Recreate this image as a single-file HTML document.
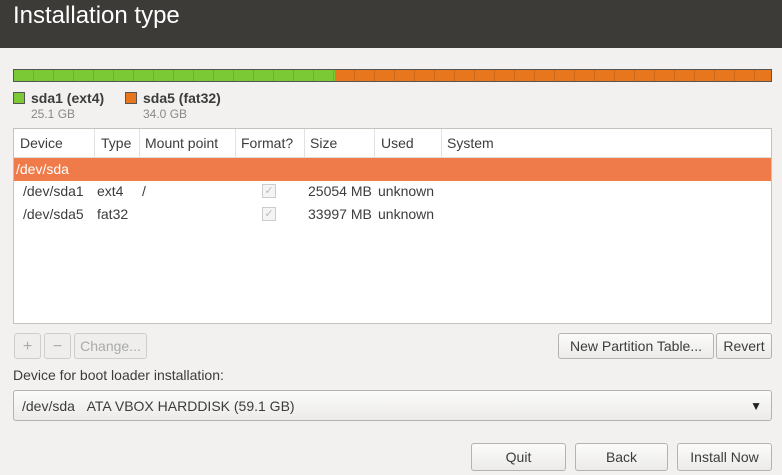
<!DOCTYPE html>
<html><head><style>
*{box-sizing:border-box;margin:0;padding:0}
body{width:782px;height:475px;background:#f2f1f0;font-family:"Liberation Sans",sans-serif;font-size:14px;color:#3c3c3c;position:relative;overflow:hidden}
.a{position:absolute}
.title{left:0;top:0;width:782px;height:48px;background:#3c3b37;color:#fff;font-size:24px;padding:2px 13px}
.bar{left:13px;top:69px;width:759px;height:13px;border:1px solid #555;overflow:hidden}
.g{left:0;top:0;width:321px;height:13px;background:#7bc935;background-image:repeating-linear-gradient(90deg,transparent 0 19px,rgba(0,0,0,.12) 19px 20px)}
.o{left:321px;top:0;width:440px;height:13px;background:#e8761c;background-image:repeating-linear-gradient(90deg,transparent 0 19px,rgba(0,0,0,.12) 19px 20px)}
.btn{border:1px solid #b5b3ae;border-radius:3px;background:linear-gradient(#fbfbfa,#ecebe9);text-align:center;line-height:25px;color:#3c3c3c}
.dis{color:#aaa;border-color:#cfcdc9;background:#efeeec}
.tbl{left:13px;top:128px;width:759px;height:196px;background:#fff;border:1px solid #c4c2bd}
.hd{height:29px;border-bottom:1px solid #ddd;position:relative}
.hd span{position:absolute;top:6px}
.sep{position:absolute;top:0;width:1px;height:28px;background:#e2e1df}
.chk{display:inline-block;width:14px;height:14px;border:1px solid #ccc;background:#f4f4f4;color:#bbb;font-size:11px;line-height:12px;text-align:center}
</style></head><body>
<div class="a title">Installation type</div>
<div class="a bar"><div class="a g"></div><div class="a o"></div></div>
<div class="a" style="left:13px;top:92px;width:12px;height:12px;background:#7bc935;border:1px solid #555"></div>
<div class="a" style="left:31px;top:90px;font-weight:bold;font-size:14px">sda1 (ext4)</div>
<div class="a" style="left:31px;top:107px;font-size:12px;color:#888">25.1 GB</div>
<div class="a" style="left:125px;top:92px;width:12px;height:12px;background:#e8761c;border:1px solid #555"></div>
<div class="a" style="left:143px;top:90px;font-weight:bold;font-size:14px">sda5 (fat32)</div>
<div class="a" style="left:143px;top:107px;font-size:12px;color:#888">34.0 GB</div>
<div class="a tbl">
 <div class="hd">
  <span style="left:6px">Device</span><div class="sep" style="left:80px"></div>
  <span style="left:87px">Type</span><div class="sep" style="left:125px"></div>
  <span style="left:131px">Mount point</span><div class="sep" style="left:221px"></div>
  <span style="left:227px">Format?</span><div class="sep" style="left:290px"></div>
  <span style="left:296px">Size</span><div class="sep" style="left:360px"></div>
  <span style="left:367px">Used</span><div class="sep" style="left:427px"></div>
  <span style="left:433px">System</span>
 </div>
 <div style="height:23px;background:#ef7b4a;color:#fff;padding:3px 2px">/dev/sda</div>
 <div class="a" style="left:9px;top:54px">/dev/sda1</div><div class="a" style="left:83px;top:54px">ext4</div><div class="a" style="left:128px;top:54px">/</div><div class="a" style="left:248px;top:55px;line-height:0"><span class="chk">✓</span></div><div class="a" style="left:294px;top:54px">25054 MB</div><div class="a" style="left:364px;top:54px">unknown</div>
 <div class="a" style="left:9px;top:77px">/dev/sda5</div><div class="a" style="left:83px;top:77px">fat32</div><div class="a" style="left:248px;top:78px;line-height:0"><span class="chk">✓</span></div><div class="a" style="left:294px;top:77px">33997 MB</div><div class="a" style="left:364px;top:77px">unknown</div>
</div>
<div class="a btn dis" style="left:14px;top:333px;width:27px;height:26px;font-size:16px">+</div>
<div class="a btn dis" style="left:44px;top:333px;width:27px;height:26px;font-size:16px">−</div>
<div class="a btn dis" style="left:74px;top:333px;width:73px;height:26px">Change...</div>
<div class="a btn" style="left:558px;top:333px;width:156px;height:26px">New Partition Table...</div>
<div class="a btn" style="left:716px;top:333px;width:56px;height:26px">Revert</div>
<div class="a" style="left:13px;top:367px">Device for boot loader installation:</div>
<div class="a btn" style="left:13px;top:390px;width:759px;height:31px;text-align:left;padding:0 8px;line-height:30px">/dev/sda&nbsp;&nbsp;&nbsp;ATA VBOX HARDDISK (59.1 GB)<span style="position:absolute;right:9px;top:0;font-size:12px;color:#222">▼</span></div>
<div class="a btn" style="left:471px;top:443px;width:95px;height:28px;line-height:27px">Quit</div>
<div class="a btn" style="left:575px;top:443px;width:93px;height:28px;line-height:27px">Back</div>
<div class="a btn" style="left:677px;top:443px;width:95px;height:28px;line-height:27px">Install Now</div>
</body></html>
